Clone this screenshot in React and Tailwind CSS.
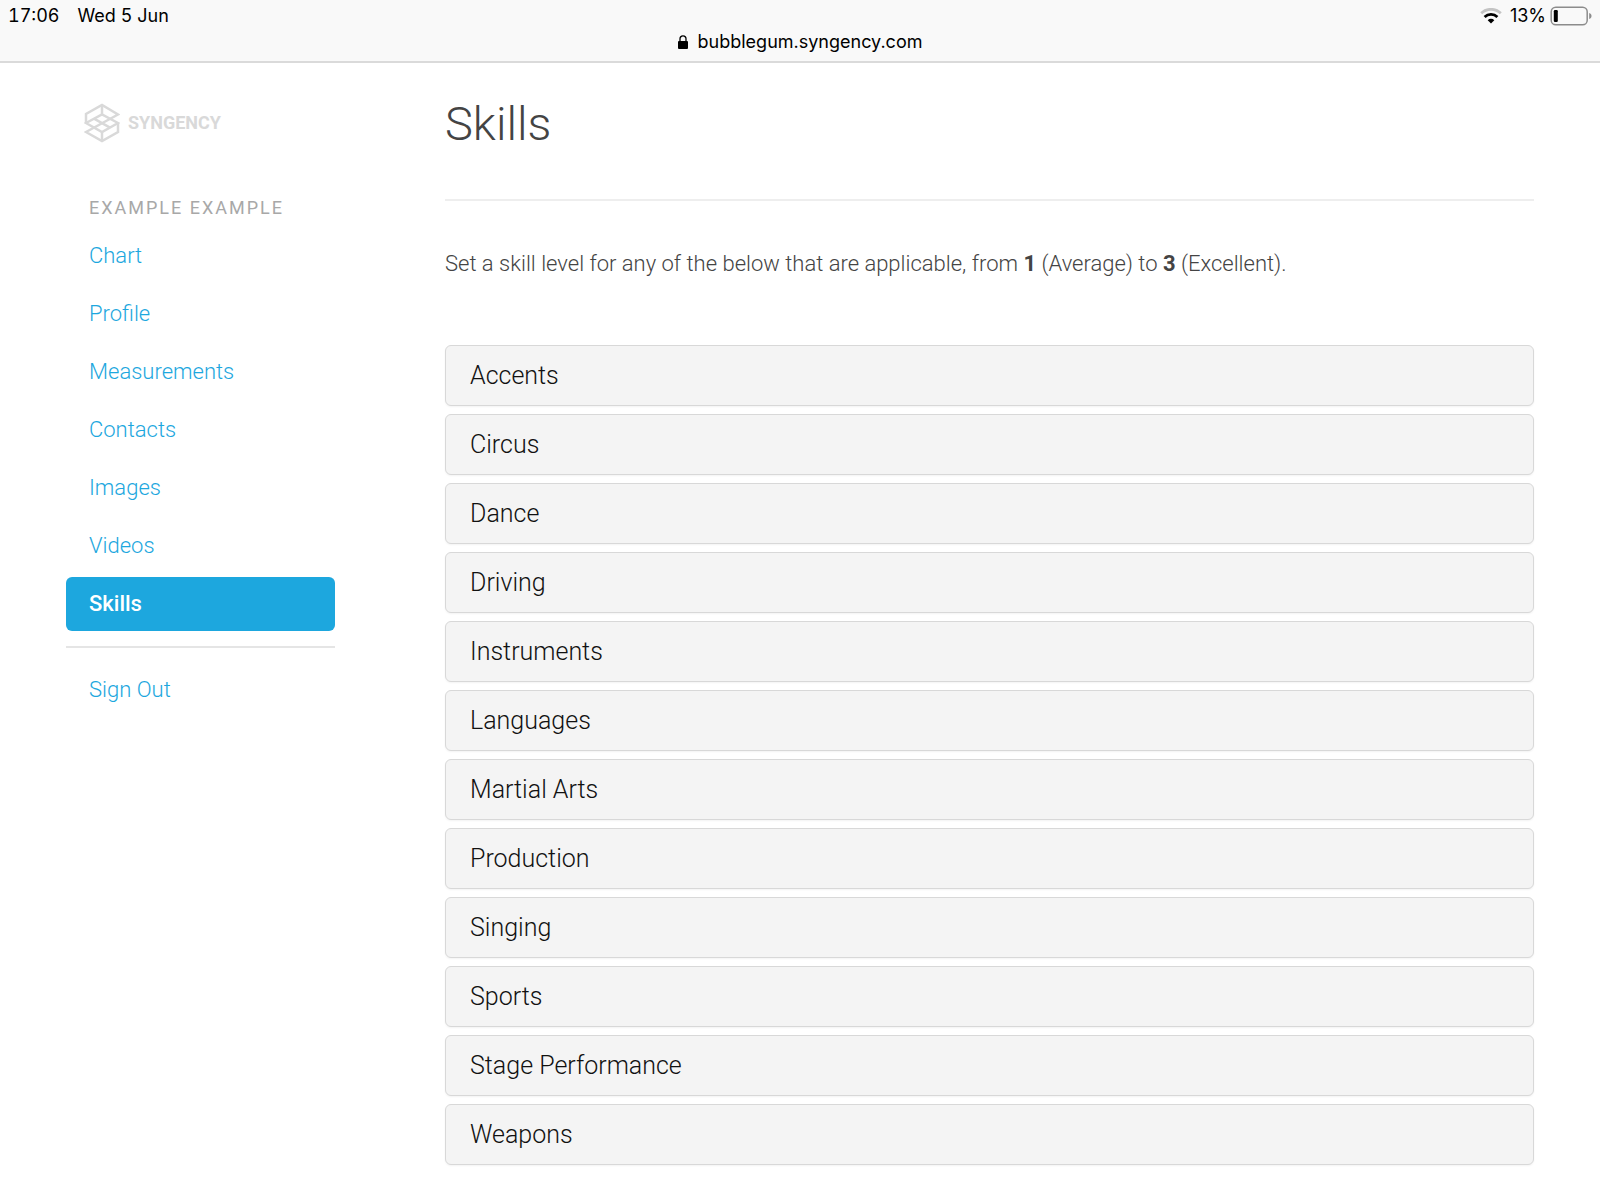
import React from 'react'

const navItems = ['Chart', 'Profile', 'Measurements', 'Contacts', 'Images', 'Videos', 'Skills']

const skillGroups = [
  'Accents',
  'Circus',
  'Dance',
  'Driving',
  'Instruments',
  'Languages',
  'Martial Arts',
  'Production',
  'Singing',
  'Sports',
  'Stage Performance',
  'Weapons'
]

function WifiIcon() {
  return (
    <svg viewBox="0 0 22 16" className="w-[22px] h-4" fill="none" aria-hidden="true">
      <path d="M1.2 5.3a14 14 0 0 1 19.6 0" stroke="#c4c4c4" strokeWidth="2.8" />
      <path d="M4.6 9a9.2 9.2 0 0 1 12.8 0" stroke="#000" strokeWidth="2.8" />
      <path d="M7.7 12.2a4.7 4.7 0 0 1 6.6 0L11 15.6z" fill="#000" />
    </svg>
  )
}

function BatteryIcon() {
  return (
    <svg viewBox="0 0 42 20" className="w-[42px] h-5" fill="none" aria-hidden="true">
      <rect x="1.2" y="1.2" width="36" height="17.6" rx="4.6" stroke="#8c8c8c" strokeWidth="1.5" />
      <rect x="3.8" y="4" width="4" height="12" rx="1.2" fill="#000" />
      <path d="M39.2 7c1.6.5 2.3 1.6 2.3 3s-.7 2.5-2.3 3z" fill="#8c8c8c" />
    </svg>
  )
}

function LockIcon() {
  return (
    <svg viewBox="0 0 10 14" className="w-[10px] h-[14px]" fill="none" aria-hidden="true">
      <rect x="0" y="6" width="10" height="8" rx="1" fill="#000" />
      <path d="M2 6.5V3.8a3 3 0 0 1 6 0v2.7" stroke="#000" strokeWidth="1.3" />
    </svg>
  )
}

function Logo() {
  return (
    <a href="#" aria-label="Syngency" className="flex items-center gap-2 self-start ml-[18px] text-[#d9d9d9]">
      <svg viewBox="0 0 36 40" className="w-9 h-10" fill="none" stroke="currentColor" strokeWidth="2.5" aria-hidden="true">
        <path d="M2 20V11L18 2 34 11.5 2 29 18 38 34 29V20" />
        <path d="M2 20 18 11.3 34 20 18 29z" />
        <path d="M18 2v9.3M18 29v9M10 15.6 26 24.6" />
      </svg>
      <span className="text-lg leading-6 font-bold">SYNGENCY</span>
    </a>
  )
}

function StatusBar() {
  return (
    <header className="bg-[#f9f9f9] border-b-2 border-[#dadada] px-2 pt-1 pb-[7px] font-['Inter',sans-serif] text-lg leading-6 text-black">
      <div className="flex justify-between">
        <div className="flex gap-[18px] tabular-nums">
          <span>17:06</span>
          <span>Wed 5 Jun</span>
        </div>
        <div className="flex items-center gap-2">
          <WifiIcon />
          <div className="flex items-center gap-1">
            <span>13%</span>
            <BatteryIcon />
          </div>
        </div>
      </div>
      <div className="mt-[2px] flex items-center justify-center gap-[10px]">
        <LockIcon />
        <span>bubblegum.syngency.com</span>
      </div>
    </header>
  )
}

function Sidebar() {
  return (
    <aside className="w-[269px] shrink-0 flex flex-col pt-10">
      <Logo />
      <h2 className="mt-[53px] px-[23px] text-lg leading-6 uppercase tracking-[2px] text-[#a8a8a8]">
        Example Example
      </h2>
      <nav className="mt-[9px] flex flex-col gap-1 text-[22px] leading-[30px]">
        {navItems.map((item) => (
          <a
            key={item}
            href={`#${item.toLowerCase()}`}
            aria-current={item === 'Skills' ? 'page' : undefined}
            className={
              item === 'Skills'
                ? 'rounded-md bg-[#1da7de] px-[23px] py-3 font-medium text-white'
                : 'rounded-md px-[23px] py-3 font-light text-[#1da7de] hover:bg-gray-100'
            }
          >
            {item}
          </a>
        ))}
        <hr className="my-[11px] border-t-2 border-[#e5e5e5]" />
        <a href="#sign-out" className="rounded-md px-[23px] py-3 font-light text-[#1da7de] hover:bg-gray-100">
          Sign Out
        </a>
      </nav>
    </aside>
  )
}

export default function App() {
  return (
    <div className="min-h-screen bg-white font-['Roboto',sans-serif]">
      <StatusBar />
      <div className="flex gap-[110px] px-[66px]">
        <Sidebar />
        <main className="min-w-0 flex-1 pt-[31px] pb-9">
          <h1 className="text-[47px] leading-[60px] font-light text-[#444]">Skills</h1>
          <hr className="mt-[45px] border-t-2 border-[#eee]" />
          <p className="mt-[47px] text-[22px] leading-8 font-light text-[#444]">
            Set a skill level for any of the below that are applicable, from <b className="font-bold">1</b> (Average) to{' '}
            <b className="font-bold">3</b> (Excellent).
          </p>
          <div className="mt-[65px] flex flex-col gap-2">
            {skillGroups.map((name) => (
              <button
                key={name}
                type="button"
                aria-expanded="false"
                className="rounded-md border border-[#d8d8d8] bg-[#f4f4f4] px-6 py-[14px] text-left text-[25px] leading-[31px] font-light text-[#111] shadow-xs"
              >
                {name}
              </button>
            ))}
          </div>
        </main>
      </div>
    </div>
  )
}
